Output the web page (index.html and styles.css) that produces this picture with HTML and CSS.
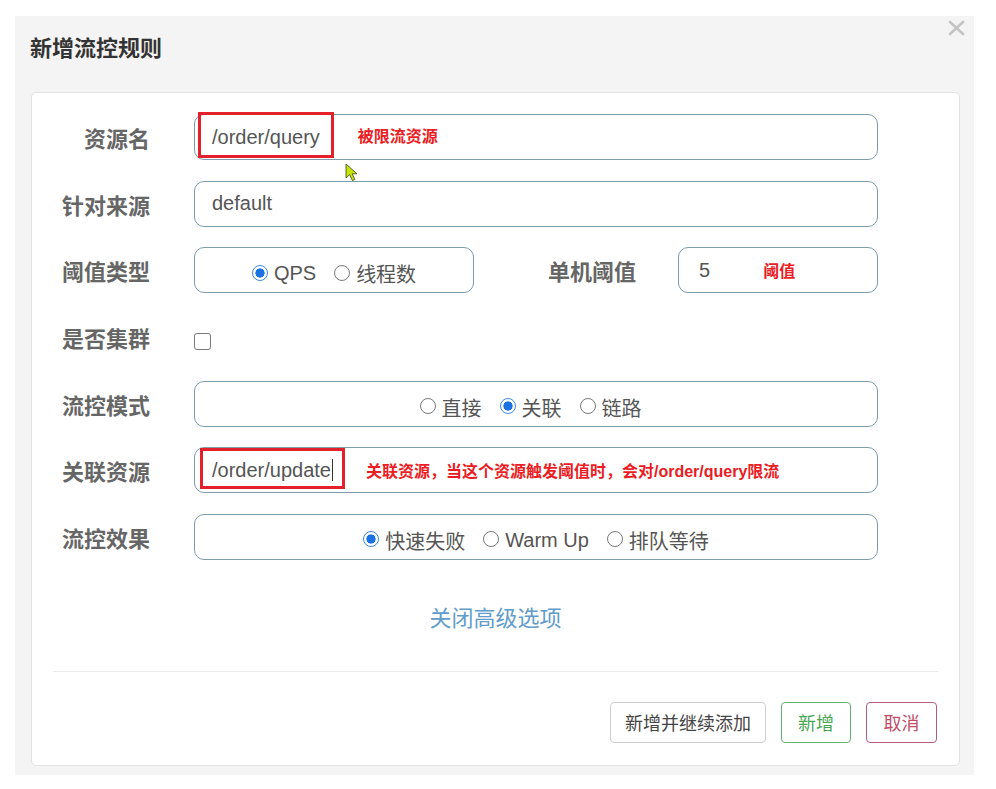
FILE: index.html
```html
<!DOCTYPE html>
<html lang="zh-CN">
<head>
<meta charset="utf-8">
<title>新增流控规则</title>
<link rel="stylesheet" href="styles.css">
</head>
<body>
<div class="modal">
  <div class="header">
    <h1 class="title">新增流控规则</h1>
    <span class="close" aria-label="close">
      <svg width="17" height="16" viewBox="0 0 17 16"><path d="M2 2 L15 14 M15 2 L2 14" stroke="#c3c3c3" stroke-width="2.6" stroke-linecap="round"/></svg>
    </span>
  </div>
  <div class="card">
    <div class="form">
      <div class="row">
        <div class="label">资源名</div>
        <div class="field wide">
          <span class="value">/order/query</span>
          <span class="note n1">被限流资源</span>
          <span class="redbox rb1"></span>
          <svg class="pointer" width="14" height="19" viewBox="0 0 14 19"><path d="M1 1 L1 15 L4.6 11.6 L7.4 17.6 L9.8 16.5 L7.2 10.8 L12 10.8 Z" fill="#c8e20a" stroke="#4a5a20" stroke-width="0.9" stroke-linejoin="round"/></svg>
        </div>
      </div>
      <div class="row">
        <div class="label">针对来源</div>
        <div class="field wide"><span class="value">default</span></div>
      </div>
      <div class="row">
        <div class="label">阈值类型</div>
        <div class="field group small">
          <span class="radio on"></span><span class="opt">QPS</span>
          <span class="radio"></span><span class="opt">线程数</span>
        </div>
        <div class="label label2">单机阈值</div>
        <div class="field count">
          <span class="value">5</span>
          <span class="note n2">阈值</span>
        </div>
      </div>
      <div class="row">
        <div class="label">是否集群</div>
        <span class="checkbox"></span>
      </div>
      <div class="row">
        <div class="label">流控模式</div>
        <div class="field wide group g5">
          <span class="radio"></span><span class="opt">直接</span>
          <span class="radio on"></span><span class="opt">关联</span>
          <span class="radio"></span><span class="opt">链路</span>
        </div>
      </div>
      <div class="row">
        <div class="label">关联资源</div>
        <div class="field wide">
          <span class="value">/order/update</span><span class="caret"></span>
          <span class="note n3">关联资源，当这个资源触发阈值时，会对/order/query限流</span>
          <span class="redbox rb2"></span>
        </div>
      </div>
      <div class="row">
        <div class="label">流控效果</div>
        <div class="field wide group">
          <span class="radio on"></span><span class="opt">快速失败</span>
          <span class="radio"></span><span class="opt">Warm Up</span>
          <span class="radio"></span><span class="opt">排队等待</span>
        </div>
      </div>
    </div>
    <div class="toggle">关闭高级选项</div>
    <div class="divider"></div>
    <div class="actions">
      <button class="btn btn-default">新增并继续添加</button>
      <button class="btn btn-ok">新增</button>
      <button class="btn btn-cancel">取消</button>
    </div>
  </div>
</div>
</body>
</html>
```
FILE: styles.css
```css
html, body {
  margin: 0;
  padding: 0;
  background: #ffffff;
}
body {
  font-family: "Liberation Sans", "Noto Sans CJK SC", sans-serif;
  color: #555;
}
.modal {
  margin: 16px 0 0 15px;
  width: 959px;
  height: 759px;
  background: #f4f4f4;
  box-sizing: border-box;
}
.header {
  display: flex;
  justify-content: space-between;
  align-items: flex-start;
  height: 76px;
  box-sizing: border-box;
  padding: 4px 9px 0 15px;
}
.title {
  margin: 11px 0 0 0;
  font-family: "Noto Sans CJK SC", sans-serif;
  font-size: 22px;
  line-height: 30px;
  font-weight: 700;
  color: #333;
}
.close {
  display: block;
  width: 17px;
  height: 16px;
}
.close svg { display: block; }
.card {
  margin: 0 14px 0 16px;
  height: 674px;
  box-sizing: border-box;
  background: #fff;
  border: 1px solid #e2e2e2;
  border-radius: 5px;
  padding-top: 21px;
}
.form {
  display: flex;
  flex-direction: column;
  gap: 20.67px;
}
.row {
  display: flex;
  align-items: center;
  height: 46px;
}
.label {
  width: 118px;
  margin-right: 44px;
  text-align: right;
  font-family: "Noto Sans CJK SC", sans-serif;
  font-size: 22px;
  font-weight: 700;
  color: #666;
  line-height: 30px;
  flex: none;
}
.label2 {
  width: 162px;
  margin-right: 42px;
}
.field {
  position: relative;
  height: 46px;
  box-sizing: border-box;
  border: 1px solid #7d9bad;
  border-radius: 10px;
  display: flex;
  align-items: center;
  padding-left: 17px;
  font-size: 20px;
  color: #555;
  flex: none;
}
.wide { width: 684px; }
.small { width: 280px; }
.count { width: 200px; padding-left: 20px; }
.value {
  font-family: "Liberation Sans", sans-serif;
  font-size: 20px;
  color: #555;
  white-space: nowrap;
}
.note {
  font-family: "Liberation Sans", "Noto Sans CJK SC", sans-serif;
  font-size: 16px;
  font-weight: 700;
  color: #ea1c24;
  white-space: nowrap;
}
.n1 { margin-left: 38px; margin-top: -5px; }
.n2 { margin-left: 53px; }
.n3 { margin-left: 33px; }
.redbox {
  position: absolute;
  border: 3px solid #e4202a;
  box-sizing: border-box;
}
.rb1 { left: 3px; top: -3px; width: 136px; height: 46px; }
.rb2 { left: 5px; top: 0px; width: 145px; height: 41px; }
.pointer {
  position: absolute;
  left: 150px;
  top: 48px;
}
.caret {
  display: inline-block;
  width: 1px;
  height: 22px;
  background: #333;
  margin-left: 1px;
}
.group {
  justify-content: center;
  padding-left: 0;
  gap: 6px;
}
.g5 { padding-right: 11px; }
.radio {
  width: 16px;
  height: 16px;
  box-sizing: border-box;
  border-radius: 50%;
  border: 1px solid #7a7a7a;
  background: #fff;
  flex: none;
  margin-top: 5px;
}
.radio.on {
  border: 1.5px solid #3d8ae6;
  background: radial-gradient(circle, #1a72e3 0 4.3px, #ffffff 4.9px);
}
.opt {
  font-family: "Liberation Sans", "Noto Sans CJK SC", sans-serif;
  font-size: 20px;
  color: #555;
  margin-right: 12px;
  margin-top: 7px;
  white-space: nowrap;
}
.opt:last-child { margin-right: 0; }
.checkbox {
  display: block;
  width: 17px;
  height: 17px;
  box-sizing: border-box;
  border: 1.5px solid #7a7a7a;
  border-radius: 3px;
  background: #fff;
  margin-top: 10px;
}
.toggle {
  margin-top: 41px;
  text-align: center;
  font-family: "Noto Sans CJK SC", sans-serif;
  font-size: 22px;
  line-height: 30px;
  color: #5f9ccb;
}
.divider {
  margin: 40px 21px 0 21px;
  height: 1px;
  background: #e9e9e9;
}
.actions {
  display: flex;
  justify-content: flex-end;
  gap: 15px;
  margin-top: 30px;
  padding-right: 22px;
}
.btn {
  height: 41px;
  box-sizing: border-box;
  background: #fff;
  border-radius: 4px;
  font-family: "Noto Sans CJK SC", sans-serif;
  font-size: 18px;
  padding: 0;
  white-space: nowrap;
  cursor: pointer;
}
.btn-default {
  width: 156px;
  border: 1px solid #cfcfcf;
  color: #444;
}
.btn-ok {
  width: 70px;
  border: 1px solid #62b170;
  color: #48a653;
}
.btn-cancel {
  width: 71px;
  border: 1px solid #b75c7e;
  color: #c04e69;
}
```
